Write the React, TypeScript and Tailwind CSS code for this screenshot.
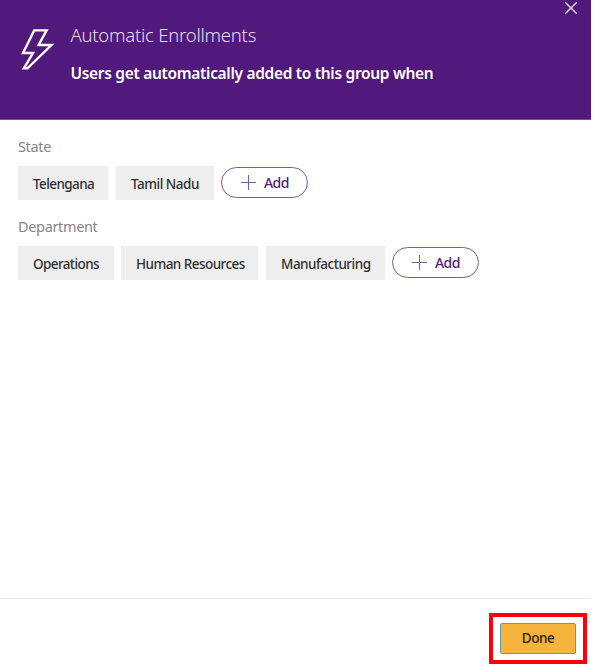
type ChipProps = { label: string; className: string };

function Chip({ label, className }: ChipProps) {
  return (
    <span className={`flex h-[34px] items-center whitespace-nowrap bg-[#eeeeee] pl-[15px] pt-[2px] text-[13.5px] font-medium text-[#303030] ${className}`}>
      {label}
    </span>
  );
}

function AddButton() {
  return (
    <button className="-mt-px flex h-[31px] w-[87px] items-center rounded-full border border-[#7d5a9f] pl-[19px] text-[14px] font-medium tracking-[-0.6px] text-[#4f1a7a]">
      <svg width="15" height="15" viewBox="0 0 15 15" className="mr-[8px] shrink-0" stroke="#796391" strokeWidth="1.1">
        <path d="M7.5 0v15M0 7.5h15" />
      </svg>
      Add
    </button>
  );
}

export default function App() {
  return (
    <div className="flex h-[670px] w-[594px] flex-col overflow-hidden bg-white font-['Noto_Sans','Open_Sans',sans-serif]">
      <header className="flex h-[120px] w-[591px] shrink-0 border-b border-[#7a5199] bg-[#51197b] text-white">
        <svg width="34" height="42" viewBox="0 0 34 42" className="ml-[21px] mt-[29px] shrink-0" fill="none" stroke="white" strokeWidth="2.4">
          <path d="M13.2 1.4H25.6L17.6 16H30.5L6.5 39.3H2.9L12 24H2L13.2 1.4Z" />
        </svg>
        <div className="ml-[15.5px] flex flex-1 flex-col whitespace-nowrap pt-[22px]">
          <h1 className="h-[26px] text-[18.5px] font-light leading-[26px] tracking-[-0.24px] text-[#e9ddf1]">Automatic Enrollments</h1>
          <p className="mt-[13px] text-[15.5px] font-semibold leading-[24px] tracking-[-0.31px]">Users get automatically added to this group when</p>
        </div>
        <svg width="14" height="14" viewBox="0 0 14 14" className="mr-[13px] mt-[1px] shrink-0" stroke="#efe6f5" strokeWidth="1.3">
          <path d="M1.2 1.2l11.6 11.6M12.8 1.2L1.2 12.8" />
        </svg>
      </header>
      <main className="flex-1 pl-[18px]">
        <h2 className="mt-[15px] h-[22px] text-[14.5px] leading-[22px] tracking-[-0.35px] text-[#848484]">State</h2>
        <div className="mt-[9px] flex h-[34px] items-center">
          <Chip label="Telengana" className="w-[90px] tracking-[-0.6px]" />
          <Chip label="Tamil Nadu" className="ml-[8px] mr-[7px] w-[98px] tracking-[-0.5px]" />
          <AddButton />
        </div>
        <h2 className="mt-[15px] h-[22px] text-[14.5px] leading-[22px] tracking-[-0.35px] text-[#848484]">Department</h2>
        <div className="mt-[9px] flex h-[34px] items-center">
          <Chip label="Operations" className="w-[96px] tracking-[-0.6px]" />
          <Chip label="Human Resources" className="ml-[7px] w-[137px] tracking-[-0.55px]" />
          <Chip label="Manufacturing" className="ml-[8px] mr-[7px] w-[119px] tracking-[-0.5px]" />
          <AddButton />
        </div>
      </main>
      <footer className="flex h-[72px] w-[591px] shrink-0 justify-end border-t border-[#eaeaea] pr-[4px] pt-[14px]">
        <div className="flex h-[51px] w-[98px] items-center justify-center border-[4px] border-[#fa0009]">
          <button className="h-[31px] w-[76px] rounded-[2px] border border-[#589bbb] bg-[#f7b43c] text-[13.5px] font-medium tracking-[-0.5px] text-[#2a2211]">Done</button>
        </div>
      </footer>
    </div>
  );
}
